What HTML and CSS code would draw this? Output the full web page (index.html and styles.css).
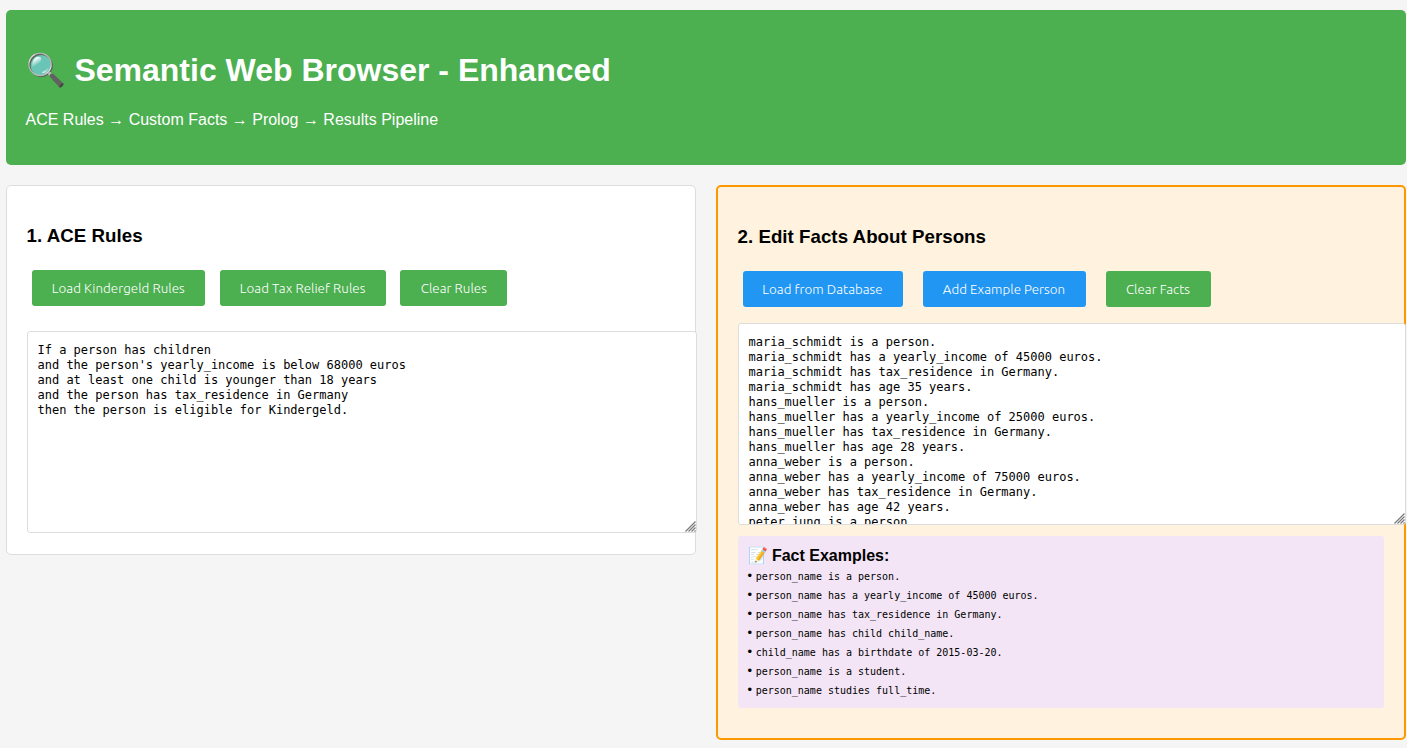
FILE: index.html
```html
<!DOCTYPE html>
<html lang="en">
<head>
<meta charset="utf-8">
<title>Semantic Web Browser - Enhanced</title>
<link rel="stylesheet" href="styles.css">
</head>
<body>
<header class="header">
<h1>🔍 Semantic Web Browser - Enhanced</h1>
<p>ACE Rules → Custom Facts → Prolog → Results Pipeline</p>
</header>
<main class="columns">
<section class="panel">
<h3>1. ACE Rules</h3>
<div class="buttons"><button class="w173">Load Kindergeld Rules</button><button class="w166">Load Tax Relief Rules</button><button class="w107">Clear Rules</button></div>
<div class="editor rules"><textarea spellcheck="false">If a person has children
and the person's yearly_income is below 68000 euros
and at least one child is younger than 18 years
and the person has tax_residence in Germany
then the person is eligible for Kindergeld.</textarea><svg class="grip" viewBox="0 0 11 11"><path d="M.5 10.5l10-10M3.5 10.5l7-7M6.5 10.5l4-4M9.5 10.5l1-1"/></svg></div>
</section>
<section class="panel facts-panel">
<h3>2. Edit Facts About Persons</h3>
<div class="buttons wide"><button class="blue w160">Load from Database</button><button class="blue w163">Add Example Person</button><button class="w105">Clear Facts</button></div>
<div class="editor facts"><textarea spellcheck="false">maria_schmidt is a person.
maria_schmidt has a yearly_income of 45000 euros.
maria_schmidt has tax_residence in Germany.
maria_schmidt has age 35 years.
hans_mueller is a person.
hans_mueller has a yearly_income of 25000 euros.
hans_mueller has tax_residence in Germany.
hans_mueller has age 28 years.
anna_weber is a person.
anna_weber has a yearly_income of 75000 euros.
anna_weber has tax_residence in Germany.
anna_weber has age 42 years.
peter_jung is a person.</textarea><svg class="grip" viewBox="0 0 11 11"><path d="M.5 10.5l10-10M3.5 10.5l7-7M6.5 10.5l4-4M9.5 10.5l1-1"/></svg></div>
<div class="examples">
<strong>📝 Fact Examples:</strong>
<div>• <code>person_name is a person.</code></div>
<div>• <code>person_name has a yearly_income of 45000 euros.</code></div>
<div>• <code>person_name has tax_residence in Germany.</code></div>
<div>• <code>person_name has child child_name.</code></div>
<div>• <code>child_name has a birthdate of 2015-03-20.</code></div>
<div>• <code>person_name is a student.</code></div>
<div>• <code>person_name studies full_time.</code></div>
</div>
</section>
</main>
</body>
</html>
```
FILE: styles.css
```css
html { overflow: hidden; background: #f5f5f5; }
body { width: 1400px; margin: 10px 0 0 5.5px; font: 16px "Liberation Sans", Arial, sans-serif; color: #000; }
.header { box-sizing: border-box; height: 155px; padding: 20px; background: #4caf50; color: #fff; border-radius: 5px; }
.header h1 { font-size: 32px; line-height: 37px; margin: 22px 0 21px; }
.header p { margin: 17px 0; line-height: 18px; padding-top: 1px; }
.columns { display: grid; grid-template-columns: 1fr 1fr; gap: 20px; margin-top: 20px; align-items: start; }
.panel { box-sizing: border-box; min-width: 0; height: 370px; padding: 20px; background: #fff; border: 1px solid #ddd; border-radius: 5px; }
.facts-panel { height: 555px; background: #fff3e0; border: 2px solid #ff9800; }
.panel h3 { margin: 19px 0; font-size: 18.72px; line-height: 22px; letter-spacing: .03px; }
.buttons { display: flex; gap: 14.8px; padding-left: 5.3px; margin-top: 23px; }
.buttons.wide { gap: 20px; padding-left: 5px; }
button { box-sizing: border-box; height: 36px; padding: 0; border: 0; border-radius: 3px; background: #4caf50; color: #fff; font: 300 13.33px Ubuntu, "Noto Sans", sans-serif; letter-spacing: .05px; white-space: nowrap; }
.blue { background: #2196f3; }
.w173 { width: 173px; }
.w166 { width: 166px; }
.w107 { width: 107px; }
.w160 { width: 160px; }
.w163 { width: 163px; }
.w105 { width: 105px; }
.editor { position: relative; }
textarea { display: block; box-sizing: border-box; width: 100%; height: 202px; padding: 11px 10px 10px; border: 1px solid #ddd; border-radius: 3px; background: #fff; font: 12px/15px "DejaVu Sans Mono", monospace; color: #000; overflow: hidden; resize: none; }
.grip { position: absolute; right: .5px; bottom: 1px; width: 11px; height: 11px; fill: none; stroke: #777; stroke-width: 1.2; }
.rules { width: 670px; margin-top: 25px; }
.facts { width: 668px; margin-top: 16px; }
.examples { box-sizing: border-box; height: 172px; margin-top: 11px; padding: 10px; background: #f3e5f5; border-radius: 3px; }
.examples strong { display: block; line-height: 20px; }
.examples div { height: 19px; font-size: 13px; line-height: 19px; }
.examples code { font: 10px "DejaVu Sans Mono", monospace; }
```
